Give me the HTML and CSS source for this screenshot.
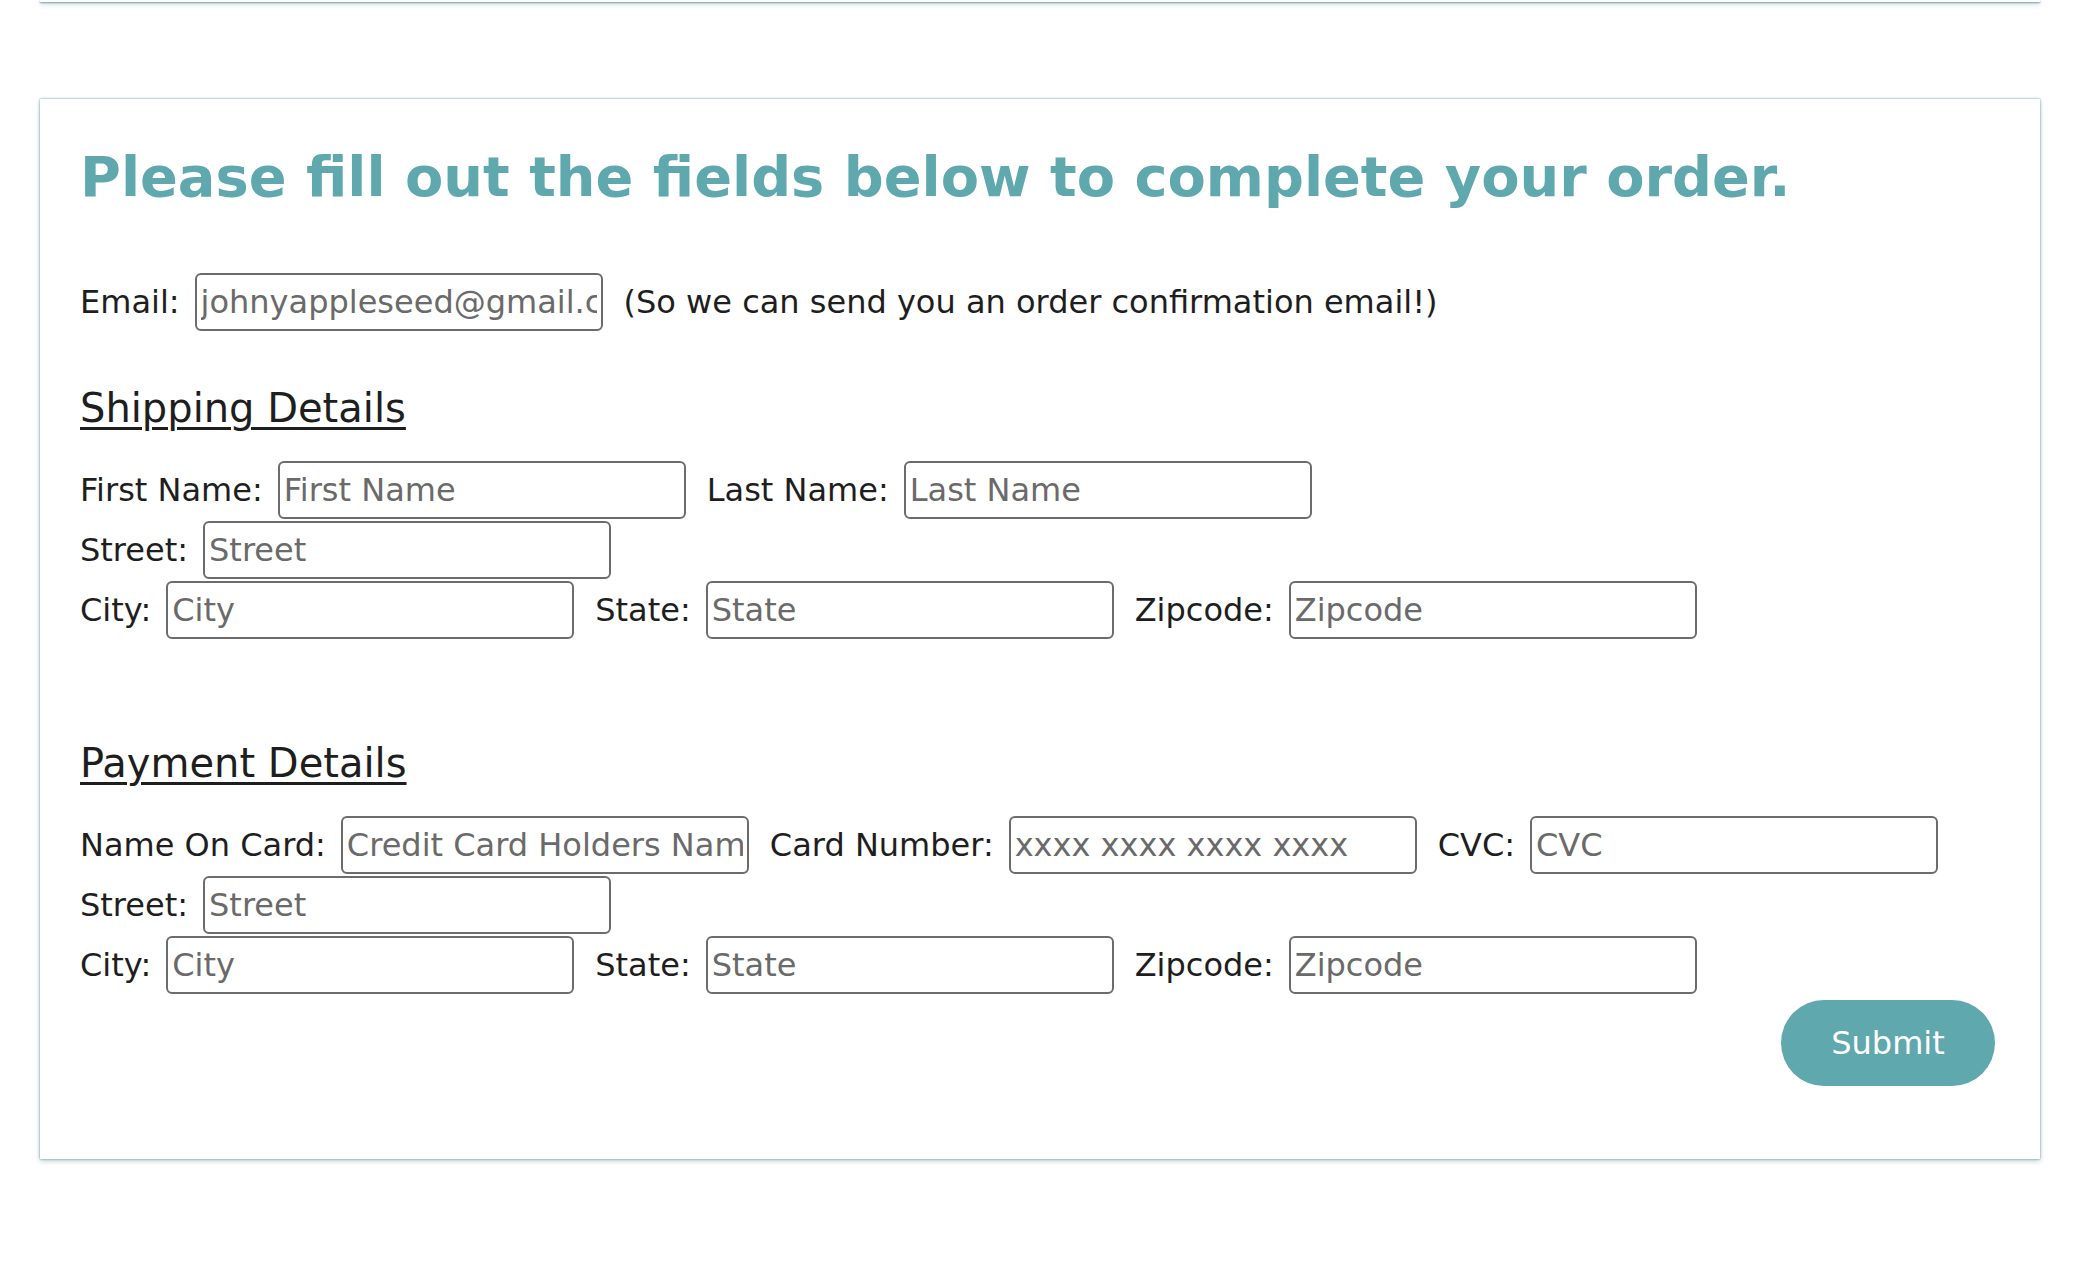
FILE: index.html
```html
<!DOCTYPE html>
<html lang="en">
<head>
<meta charset="utf-8">
<title>Checkout</title>
<link rel="stylesheet" href="styles.css">
</head>
<body>
<div class="prev-card"></div>
<main class="card">
  <h1 class="title">Please fill out the fields below to complete your order.</h1>

  <div class="row email-row">
    <label class="lbl">Email:</label>
    <input class="field" type="text" placeholder="johnyappleseed@gmail.com">
    <span class="note">(So we can send you an order confirmation email!)</span>
  </div>

  <h2 class="section">Shipping Details</h2>
  <div class="row first-row">
    <label class="lbl">First Name:</label>
    <input class="field" type="text" placeholder="First Name">
    <label class="lbl">Last Name:</label>
    <input class="field" type="text" placeholder="Last Name">
  </div>
  <div class="row">
    <label class="lbl">Street:</label>
    <input class="field" type="text" placeholder="Street">
  </div>
  <div class="row">
    <label class="lbl">City:</label>
    <input class="field" type="text" placeholder="City">
    <label class="lbl">State:</label>
    <input class="field" type="text" placeholder="State">
    <label class="lbl">Zipcode:</label>
    <input class="field" type="text" placeholder="Zipcode">
  </div>

  <h2 class="section payment">Payment Details</h2>
  <div class="row first-row">
    <label class="lbl">Name On Card:</label>
    <input class="field" type="text" placeholder="Credit Card Holders Name">
    <label class="lbl">Card Number:</label>
    <input class="field" type="text" placeholder="xxxx xxxx xxxx xxxx">
    <label class="lbl">CVC:</label>
    <input class="field" type="text" placeholder="CVC">
  </div>
  <div class="row">
    <label class="lbl">Street:</label>
    <input class="field" type="text" placeholder="Street">
  </div>
  <div class="row">
    <label class="lbl">City:</label>
    <input class="field" type="text" placeholder="City">
    <label class="lbl">State:</label>
    <input class="field" type="text" placeholder="State">
    <label class="lbl">Zipcode:</label>
    <input class="field" type="text" placeholder="Zipcode">
  </div>

  <div class="actions">
    <button class="submit" type="button">Submit</button>
  </div>
</main>
</body>
</html>
```
FILE: styles.css
```css
body {
  margin: 0;
  background: #ffffff;
  font-family: "DejaVu Sans", Verdana, sans-serif;
  color: #1e1e1e;
}

.prev-card {
  margin: 0 0 0 40px;
  width: 2000px;
  height: 2px;
  background: #ffffff;
  box-shadow: 0 1px 2px rgba(60, 115, 125, 0.7), 0 2px 5px rgba(60, 115, 125, 0.35);
}

.card {
  margin: 97px 0 40px 40px;
  width: 2000px;
  box-sizing: border-box;
  padding: 46px 45px 73px 40px;
  background: #ffffff;
  box-shadow: 0 0 2px rgba(60, 115, 125, 0.7), 0 2px 5px rgba(60, 115, 125, 0.35);
}

.title {
  margin: 0;
  font-size: 55.8px;
  line-height: 64px;
  font-weight: bold;
  color: #5fa8ae;
}

.row {
  display: flex;
  align-items: center;
  height: 60px;
  font-size: 32px;
}

.email-row {
  margin-top: 63px;
}

.lbl {
  margin-right: 15px;
  white-space: nowrap;
}

.field {
  width: 408px;
  height: 58px;
  box-sizing: border-box;
  margin: 1px 21px 1px 0;
  padding: 0 4px;
  border: 2px solid #6c6c6c;
  border-radius: 6px;
  font-family: "DejaVu Sans", Verdana, sans-serif;
  font-size: 32px;
  color: #5c5c5c;
  background: #ffffff;
  outline: none;
}

.field::placeholder {
  color: #6a6a6a;
  opacity: 1;
}

.note {
  white-space: nowrap;
}

.section {
  margin: 53px 0 0;
  font-size: 40px;
  line-height: 46px;
  font-weight: normal;
  text-decoration: underline;
  text-decoration-thickness: 3px;
  text-underline-offset: 5px;
  color: #1e1e1e;
}

.section.payment {
  margin-top: 100px;
}

.section + .first-row {
  margin-top: 29px;
}

.actions {
  display: flex;
  justify-content: flex-end;
  margin-top: 5px;
}

.submit {
  width: 214px;
  height: 86px;
  border: none;
  border-radius: 43px;
  background: #5fa8ae;
  color: #ffffff;
  font-family: "DejaVu Sans", Verdana, sans-serif;
  font-size: 32px;
  cursor: pointer;
}
```
